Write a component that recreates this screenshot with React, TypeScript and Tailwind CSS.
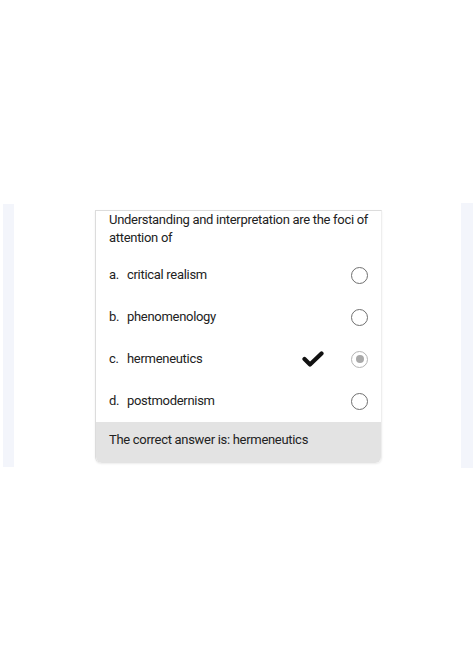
import React from 'react';

interface Option {
  letter: string;
  text: string;
  checked?: boolean;
}

const options: Option[] = [
  { letter: 'a.', text: 'critical realism' },
  { letter: 'b.', text: 'phenomenology' },
  { letter: 'c.', text: 'hermeneutics', checked: true },
  { letter: 'd.', text: 'postmodernism' },
];

const Radio: React.FC<{ checked?: boolean }> = ({ checked }) =>
  checked ? (
    <div className="w-[17px] h-[17px] rounded-full border-[1.5px] border-[#b4b4b4] flex items-center justify-center">
      <div className="w-[8px] h-[8px] rounded-full bg-[#a9a9a9]" />
    </div>
  ) : (
    <div className="w-[17px] h-[17px] rounded-full border-[1.5px] border-[#6f6f6f]" />
  );

const Check = () => (
  <svg width="22" height="16" viewBox="0 0 22 16" className="block">
    <path d="M2.5 8 L8 13.5 L19.5 2.5" fill="none" stroke="#111" strokeWidth="4.2" strokeLinecap="round" strokeLinejoin="round" />
  </svg>
);

export default function App() {
  return (
    <div className="w-[474px] h-[670px] bg-white font-['Roboto',sans-serif] text-[#222] tracking-[-0.3px]">
      <div className="pt-[204px] flex">
        <div className="ml-[3px] w-[11px] h-[263px] bg-[#f3f5fb]" />

        <div className="ml-[81px] mt-[6px] w-[287px] self-start flex flex-col border-l border-t border-[#dcdcdc] border-r-[#eeeeee] border-r rounded-b-[6px] shadow-[0_1px_2px_rgba(0,0,0,0.08)]">
          <div className="px-[13px]">
            <p className="text-[13px] leading-[18px] whitespace-nowrap">
              Understanding and interpretation are the foci of
              <br />
              attention of
            </p>
            <div className="mt-[7px] flex flex-col">
              {options.map((o) => (
                <div key={o.letter} className="h-[42px] flex items-center">
                  <span className="w-[18px] text-[13px]">{o.letter}</span>
                  <span className="text-[13px]">{o.text}</span>
                  <div className="ml-auto flex items-center">
                    {o.checked && (
                      <div className="mr-[27px]">
                        <Check />
                      </div>
                    )}
                    <Radio checked={o.checked} />
                  </div>
                </div>
              ))}
            </div>
          </div>
          <div className="h-[41px] bg-[#e3e3e3] rounded-b-[6px] px-[13px] pt-[9px] text-[13px] leading-[18px]">
            The correct answer is: hermeneutics
          </div>
        </div>

        <div className="ml-[79px] w-[12px] h-[265px] -mt-[1px] bg-[#f3f5fb]" />
      </div>
    </div>
  );
}
